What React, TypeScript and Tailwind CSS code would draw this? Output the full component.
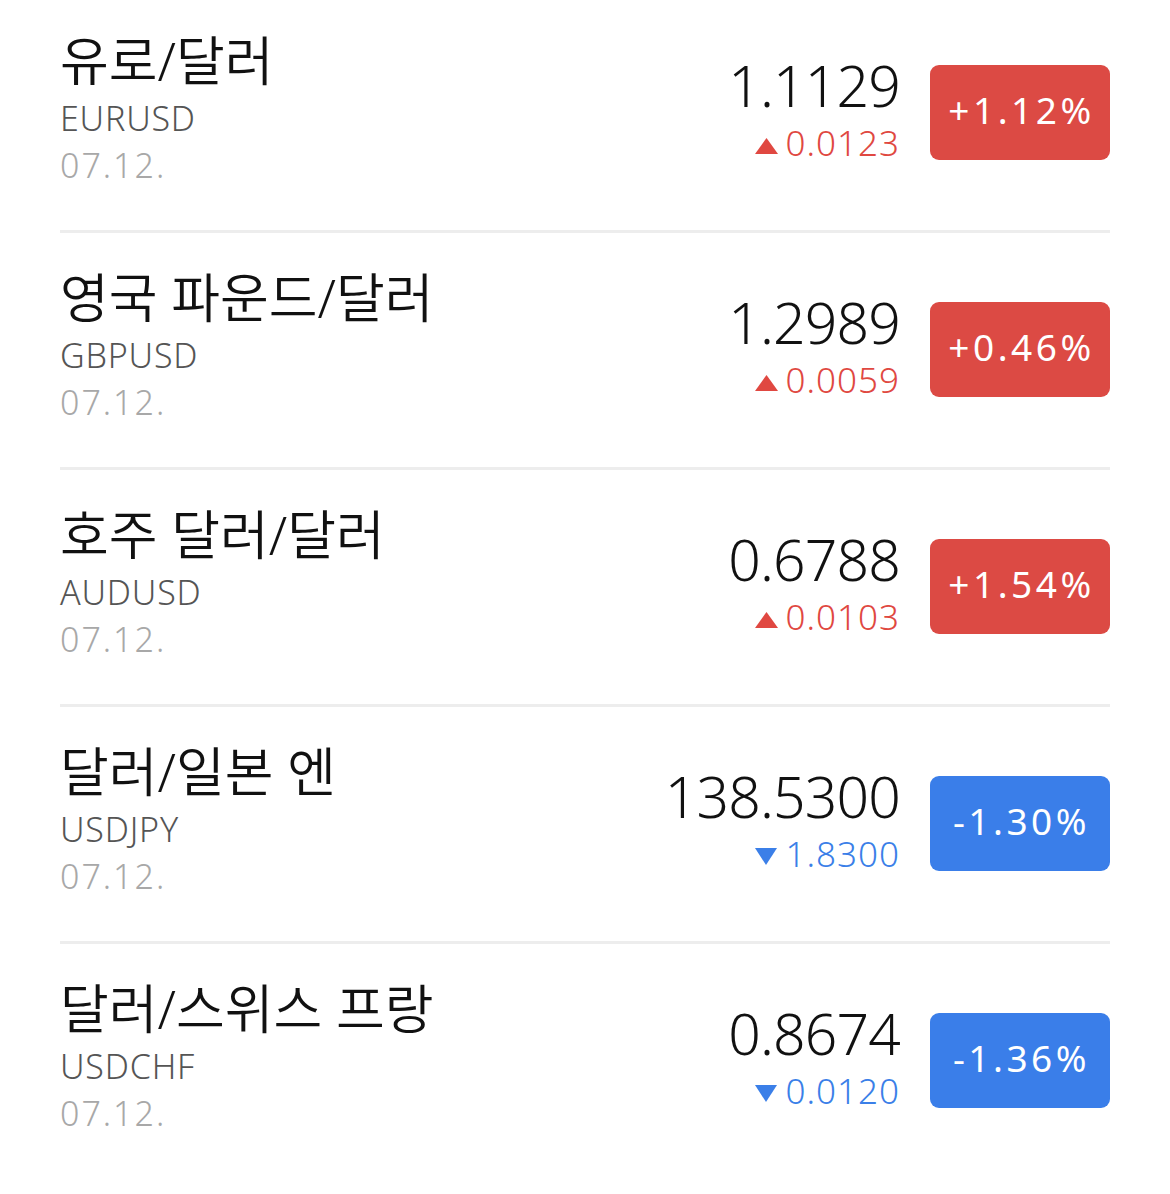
import React from "react";

type Row = {
  name: string;
  code: string;
  date: string;
  price: string;
  change: string;
  pct: string;
  up: boolean;
};

const rows: Row[] = [
  { name: "유로/달러", code: "EURUSD", date: "07.12.", price: "1.1129", change: "0.0123", pct: "+1.12%", up: true },
  { name: "영국 파운드/달러", code: "GBPUSD", date: "07.12.", price: "1.2989", change: "0.0059", pct: "+0.46%", up: true },
  { name: "호주 달러/달러", code: "AUDUSD", date: "07.12.", price: "0.6788", change: "0.0103", pct: "+1.54%", up: true },
  { name: "달러/일본 엔", code: "USDJPY", date: "07.12.", price: "138.5300", change: "1.8300", pct: "-1.30%", up: false },
  { name: "달러/스위스 프랑", code: "USDCHF", date: "07.12.", price: "0.8674", change: "0.0120", pct: "-1.36%", up: false },
];

const font = "font-['Noto_Sans','Noto_Sans_CJK_KR',sans-serif]";

function Item({ r, last }: { r: Row; last: boolean }) {
  return (
    <div className={last ? "" : "pb-[4px]"}>
      <div className="h-[230px] flex items-start justify-between">
        <div className="pt-[29px] flex flex-col">
          <div className="text-[53px] leading-[63px] text-[#111111] font-[350]">{r.name}</div>
          <div className="mt-[3px] text-[34px] leading-[46px] text-[#555555] font-light tracking-[0.8px]">{r.code}</div>
          <div className="mt-[2px] text-[34px] leading-[44px] text-[#a8a8a8] font-light tracking-[2px]">{r.date}</div>
        </div>
        <div className="flex items-start gap-[30px]">
          <div className="mt-[56px] flex flex-col items-end">
            <div className="text-[57px] leading-[58px] font-light tracking-[-0.8px] text-[#111111]">{r.price}</div>
            <div
              className={
                "mt-[9px] flex items-center text-[35px] leading-[40px] font-light tracking-[1px] " +
                (r.up ? "text-[#e04841]" : "text-[#3b7fe8]")
              }
            >
              {r.up ? (
                <svg width="23" height="16" viewBox="0 0 23 16" className="mr-[8px] mt-[5px]">
                  <polygon points="11.5,0 23,16 0,16" fill="#e04841" />
                </svg>
              ) : (
                <svg width="22" height="17" viewBox="0 0 22 17" className="mr-[9px] mt-[4px]">
                  <polygon points="0,0 22,0 11,17" fill="#3b7fe8" />
                </svg>
              )}
              <span>{r.change}</span>
            </div>
          </div>
          <div
            className={
              "mt-[65px] w-[180px] h-[95px] rounded-[9px] flex items-center justify-center text-white text-[37px] font-normal tracking-[3.5px] pb-[5px] " +
              (r.up ? "bg-[#dc4a44]" : "bg-[#3a7ee9]")
            }
          >
            <span className="pl-[3px]">{r.pct}</span>
          </div>
        </div>
      </div>
      {!last && <div className="h-[3px] bg-[#ededed]" />}
    </div>
  );
}

export default function App() {
  return (
    <div className={"w-[1170px] h-[1194px] bg-white px-[60px] overflow-hidden " + font}>
      {rows.map((r, i) => (
        <Item key={r.code} r={r} last={i === rows.length - 1} />
      ))}
    </div>
  );
}
